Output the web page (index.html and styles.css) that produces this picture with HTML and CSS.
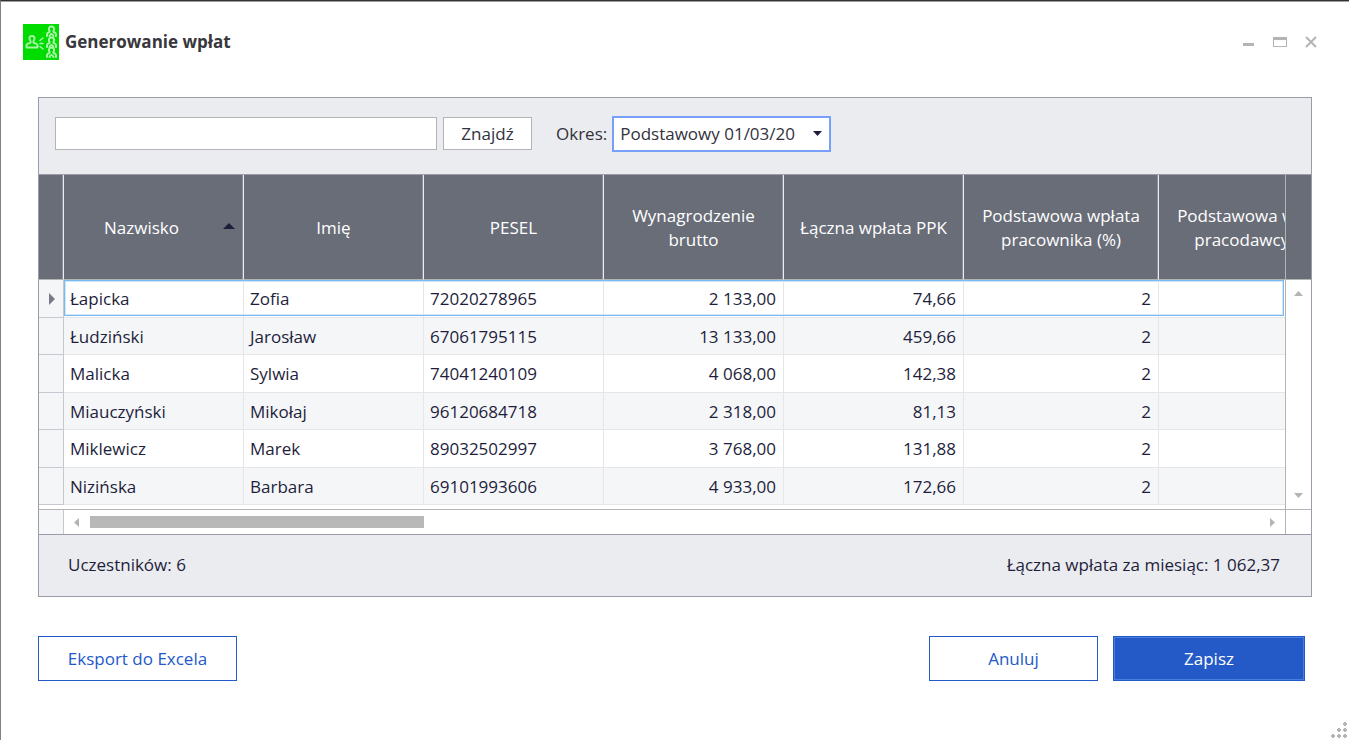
FILE: index.html
```html
<!DOCTYPE html>
<html lang="pl">
<head>
    <meta charset="UTF-8">
    <meta name="viewport" content="width=device-width, initial-scale=1.0">
    <title>Generowanie wpłat</title>
    <link rel="stylesheet" href="styles.css">
</head>
<body>
    <div class="window">
        <header class="titlebar">
            <svg class="logo" width="36" height="36" viewBox="0 0 36 36">
                <rect width="36" height="36" fill="#00dc00"/>
                <g fill="none" stroke="#a8f5a8" stroke-width="2" stroke-linejoin="round" stroke-linecap="round">
                    <path d="M3.500 23.500V21Q4 19.500 7 19Q8 18.500 7.500 17Q6 15 6.500 13.500Q7 12 9 12T11.500 13.500Q12 15 10.500 17Q10 18.500 11 19Q14 19.500 14.500 21V23.500Z"/>
                    <path d="M17 19.500H20M17 16.500L20 14M17 22.500L20 25" stroke-width="1.5"/>
                    <path id="person" d="M24 12V10Q24.500 8.500 26.500 8Q27 7 26 6Q25.500 2.500 28.500 2.500T31 6Q30 7 30.500 8Q32.500 8.500 33 10V12M26.500 12Q28.500 8 30.500 12"/>
                    <use href="#person" y="11"/>
                    <use href="#person" y="21"/>
                </g>
            </svg>
            <h1>Generowanie wpłat</h1>
            <div class="window-controls">
                <button type="button" aria-label="Minimalizuj">
                    <svg width="14" height="12"><path d="M2 7H13V10H2Z" fill="#b4b4b4"/></svg>
                </button>
                <button type="button" aria-label="Maksymalizuj">
                    <svg width="14" height="12"><path d="M0 1H14V11H0ZM1 4V10H13V4Z" fill="#b4b4b4" fill-rule="evenodd"/></svg>
                </button>
                <button type="button" aria-label="Zamknij">
                    <svg width="14" height="12"><path d="M1 1L11 11M11 1L1 11" stroke="#b4b4b4" stroke-width="2"/></svg>
                </button>
            </div>
        </header>

        <main class="panel">
            <form class="toolbar">
                <input type="text" class="search" aria-label="Szukaj">
                <button type="button" class="find-btn">Znajdź</button>
                <label for="period">Okres:</label>
                <div class="select-box">
                    <select id="period">
                        <option>Podstawowy 01/03/20</option>
                    </select>
                    <svg class="select-arrow" width="9" height="5"><path d="M0 0H9L4.500 5Z" fill="#1e1e3c"/></svg>
                </div>
            </form>

            <div class="grid">
                <div class="table-view">
                    <table>
                        <colgroup>
                            <col class="col-mark">
                            <col class="col"><col class="col"><col class="col"><col class="col"><col class="col">
                            <col class="col-wide"><col class="col-wide">
                        </colgroup>
                        <thead>
                            <tr>
                                <th></th>
                                <th class="sorted">Nazwisko
                                    <svg class="sort-arrow" width="12" height="6"><path d="M0 6H12L6 0Z" fill="#1e1e3c"/></svg>
                                </th>
                                <th>Imię</th>
                                <th>PESEL</th>
                                <th>Wynagrodzenie brutto</th>
                                <th>Łączna wpłata PPK</th>
                                <th>Podstawowa wpłata pracownika (%)</th>
                                <th>Podstawowa wpłata pracodawcy (%)</th>
                            </tr>
                        </thead>
                        <tbody>
                            <tr>
                                <td class="mark"><svg width="6" height="12"><path d="M0 0V12L6 6Z" fill="#787887"/></svg></td>
                                <td>Łapicka</td><td>Zofia</td><td>72020278965</td>
                                <td class="num">2 133,00</td><td class="num">74,66</td><td class="num">2</td><td></td>
                            </tr>
                            <tr>
                                <td class="mark"></td>
                                <td>Łudziński</td><td>Jarosław</td><td>67061795115</td>
                                <td class="num">13 133,00</td><td class="num">459,66</td><td class="num">2</td><td></td>
                            </tr>
                            <tr>
                                <td class="mark"></td>
                                <td>Malicka</td><td>Sylwia</td><td>74041240109</td>
                                <td class="num">4 068,00</td><td class="num">142,38</td><td class="num">2</td><td></td>
                            </tr>
                            <tr>
                                <td class="mark"></td>
                                <td>Miauczyński</td><td>Mikołaj</td><td>96120684718</td>
                                <td class="num">2 318,00</td><td class="num">81,13</td><td class="num">2</td><td></td>
                            </tr>
                            <tr>
                                <td class="mark"></td>
                                <td>Miklewicz</td><td>Marek</td><td>89032502997</td>
                                <td class="num">3 768,00</td><td class="num">131,88</td><td class="num">2</td><td></td>
                            </tr>
                            <tr>
                                <td class="mark"></td>
                                <td>Nizińska</td><td>Barbara</td><td>69101993606</td>
                                <td class="num">4 933,00</td><td class="num">172,66</td><td class="num">2</td><td></td>
                            </tr>
                        </tbody>
                    </table>
                    <div class="selection"></div>
                </div>
                <div class="scroll-y">
                    <div class="scroll-head"></div>
                    <div class="scroll-track">
                        <button type="button" aria-label="W górę"><svg width="9" height="5"><path d="M0 5H9L4.500 0Z" fill="#b4b4b4"/></svg></button>
                        <button type="button" aria-label="W dół"><svg width="9" height="5"><path d="M0 0H9L4.500 5Z" fill="#b4b4b4"/></svg></button>
                    </div>
                </div>
            </div>

            <div class="scroll-x">
                <div class="scroll-x-mark"></div>
                <div class="scroll-x-track">
                    <button type="button" aria-label="W lewo"><svg width="5" height="9"><path d="M5 0V9L0 4.500Z" fill="#b4b4b4"/></svg></button>
                    <div class="thumb-area"><div class="thumb"></div></div>
                    <button type="button" aria-label="W prawo"><svg width="5" height="9"><path d="M0 0V9L5 4.500Z" fill="#b4b4b4"/></svg></button>
                </div>
                <div class="scroll-corner"></div>
            </div>

            <div class="summary">
                <span>Uczestników: 6</span>
                <span>Łączna wpłata za miesiąc: 1 062,37</span>
            </div>
        </main>

        <footer class="actions">
            <button type="button" class="btn export-btn">Eksport do Excela</button>
            <button type="button" class="btn cancel-btn">Anuluj</button>
            <button type="button" class="btn save-btn">Zapisz</button>
        </footer>

        <svg class="grip" width="18" height="18" fill="#b4b4b4">
            <path d="M13 2h4v2h-4zM14 1h2v4h-2zM7 8h4v2H7zM8 7h2v4H8zM13 8h4v2h-4zM14 7h2v4h-2zM1 14h4v2H1zM2 13h2v4H2zM7 14h4v2H7zM8 13h2v4H8zM13 14h4v2h-4zM14 13h2v4h-2z"/>
        </svg>
    </div>
</body>
</html>
```
FILE: styles.css
```css
* {
    box-sizing: border-box;
}

body {
    margin: 0;
    background: #fff;
    color: #1e1e3c;
    font-family: 'Open Sans', 'Noto Sans', sans-serif;
    font-size: 17px;
    line-height: 24px;
}

button, input, select {
    font: inherit;
    color: #32323c;
    margin: 0;
}

button {
    padding: 0;
    cursor: pointer;
}

svg {
    display: block;
}

.window {
    position: relative;
    min-height: 100vh;
    border-top: 1px solid #323232;
    border-left: 1px solid #828282;
    box-shadow: inset 0 1px 0 #a0a0a0;
}

.titlebar {
    display: flex;
    align-items: center;
    gap: 6px;
    padding: 23px 30px 0 22px;
}

.titlebar h1 {
    flex: 1;
    margin: 0;
    font-size: 17px;
    font-weight: 700;
    color: #37373c;
}

.window-controls {
    display: flex;
    gap: 18px;
}

.window-controls button {
    border: none;
    background: none;
}

.panel {
    margin: 37px 37px 0;
    border: 1px solid #9b9baa;
    background: #ebecf0;
}

.toolbar {
    display: flex;
    align-items: center;
    height: 77px;
    padding: 0 16px 5px;
    border-bottom: 1px solid #9b9baa;
}

.search {
    width: 382px;
    height: 33px;
    padding: 0 6px;
    border: 1px solid #b4b4b4;
}

.find-btn {
    width: 89px;
    height: 33px;
    margin: 0 24px 0 6px;
    border: 1px solid #b4b4b4;
    background: #fff;
}

.toolbar label {
    margin-right: 5px;
    color: #32323c;
}

.select-box {
    position: relative;
    width: 219px;
}

.select-box select {
    appearance: none;
    display: block;
    width: 100%;
    height: 36px;
    padding: 0 24px 0 6px;
    border: 2px solid #78a0fa;
    border-radius: 0;
    background: #fff;
    outline: none;
}

.select-arrow {
    position: absolute;
    right: 9px;
    top: 15px;
    pointer-events: none;
}

.grid {
    display: flex;
    background: #fff;
}

.table-view {
    position: relative;
    flex: 1;
    min-width: 0;
    overflow: hidden;
    padding-bottom: 4px;
}

table {
    table-layout: fixed;
    width: 1315px;
    border-collapse: separate;
    border-spacing: 0;
}

.col-mark {
    width: 25px;
}

.col {
    width: 180px;
}

.col-wide {
    width: 195px;
}

th {
    position: relative;
    height: 105px;
    padding: 1px 12px 0;
    background: #696d78;
    border-right: 1px solid #ebebeb;
    border-bottom: 1px solid #b4b4b4;
    box-shadow: inset -1px 0 0 #8c8f98;
    color: #fff;
    font-weight: normal;
}

.sorted {
    padding-right: 36px;
}

.sort-arrow {
    position: absolute;
    right: 8px;
    top: 48px;
}

td {
    height: 38px;
    padding: 1px 7px 0 6px;
    border-right: 1px solid #e6e6e6;
    border-bottom: 1px solid #e6e6e6;
}

tbody tr:nth-child(even) td {
    height: 37px;
    background: #f5f6f8;
}

tbody td.mark {
    padding: 0 0 0 10px;
    background: #f5f6f8;
    border-color: #c8c8d2;
}

.num {
    text-align: right;
}

/* focused row frame */
.selection {
    position: absolute;
    top: 105px;
    left: 25px;
    right: 1px;
    height: 36px;
    border: 1px solid #78b9f0;
    box-shadow: inset 0 0 0 1px #d2e8fa;
    pointer-events: none;
}

.scroll-y {
    display: flex;
    flex-direction: column;
    width: 26px;
    border-left: 1px solid #b4b4b4;
}

.scroll-head {
    height: 105px;
    background: #696d78;
    border-bottom: 1px solid #b4b4b4;
}

.scroll-track {
    flex: 1;
    display: flex;
    flex-direction: column;
    justify-content: space-between;
    align-items: center;
    padding: 11px 0;
}

.scroll-track button, .scroll-x-track button {
    border: none;
    background: none;
}

.scroll-x {
    display: flex;
    height: 26px;
    background: #fff;
    border-top: 1px solid #b4b4b4;
    border-bottom: 1px solid #9b9baa;
}

.scroll-x-mark {
    width: 25px;
    background: #f5f6f8;
    border-right: 1px solid #c8c8d2;
}

.scroll-x-track {
    flex: 1;
    display: flex;
    align-items: center;
    gap: 11px;
    padding: 0 10px;
}

.thumb-area {
    flex: 1;
}

.thumb {
    width: 28.6%;
    height: 12px;
    background: #b8b8b8;
}

.scroll-corner {
    width: 26px;
    border-left: 1px solid #b4b4b4;
}

.summary {
    display: flex;
    justify-content: space-between;
    padding: 18px 31px 19px 29px;
}

.actions {
    display: flex;
    gap: 15px;
    padding: 39px 44px 0 37px;
}

.btn {
    height: 45px;
    border: 1px solid #235ac8;
    background: #fff;
    color: #235ac8;
}

.export-btn {
    width: 199px;
    margin-right: auto;
}

.cancel-btn {
    width: 169px;
}

.save-btn {
    width: 192px;
    background: #235ac8;
    color: #fff;
    box-shadow: inset 0 0 0 1px #4b7de1;
}

.grip {
    position: absolute;
    right: 1px;
    bottom: 1px;
}
```
